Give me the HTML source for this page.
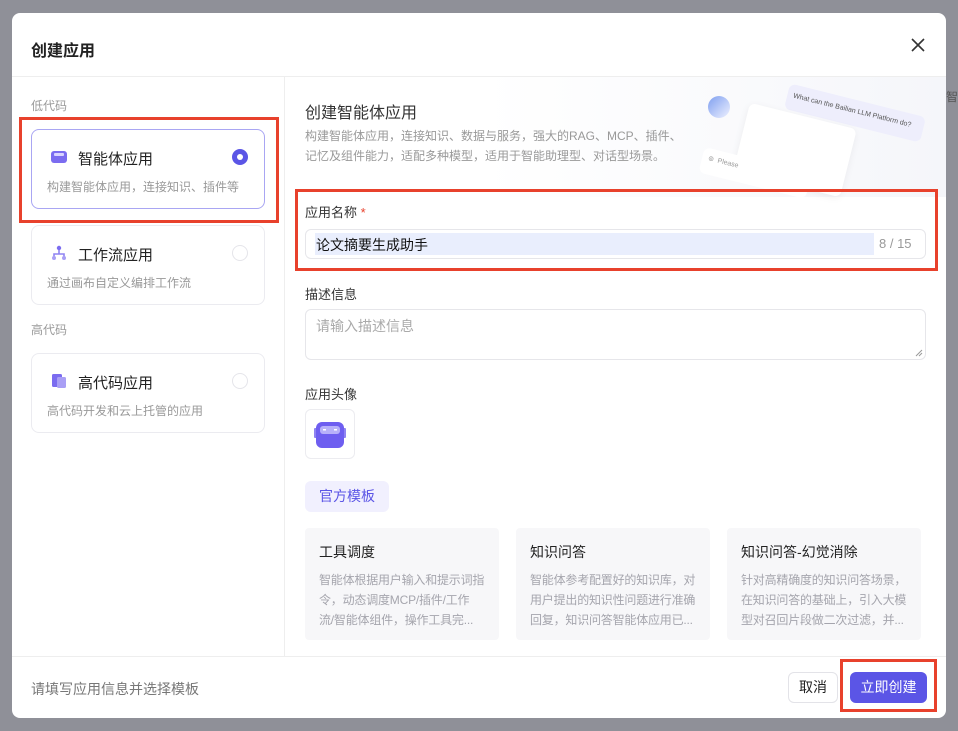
<!DOCTYPE html>
<html><head><meta charset="utf-8"><style>
*{box-sizing:border-box;margin:0;padding:0}
body{width:958px;height:731px;background:#8f9098;font-family:"Liberation Sans","Noto Sans CJK SC",sans-serif;position:relative;overflow:hidden;color:#1f2030}
.abs{position:absolute}
.modal{left:12px;top:13px;width:934px;height:705px;background:#fff;border-radius:8px;overflow:hidden}
.red{position:absolute;border:3px solid #e8412c}
.card{position:absolute;left:31px;width:234px;border:1px solid #ebebf0;border-radius:8px;background:#fff}
.ct{position:absolute;left:47px;font-size:15px;color:#222}
.cd{position:absolute;left:16px;font-size:12px;color:#999}
.lbl{font-size:13px;color:#333;position:absolute;left:305px}
.tpl{position:absolute;top:528px;width:194px;height:112px;background:#f7f7f9;border-radius:4px;padding:14px 14px;overflow:hidden}
.tpl b{display:block;font-weight:normal;font-size:14px;color:#222;margin-bottom:8px}
.tpl p{font-size:12px;color:#a5a5ad;line-height:20px;white-space:nowrap;letter-spacing:-0.2px}
</style></head><body>
<div class="abs" style="right:0;top:88px;width:12px;height:14px;font-size:12px;color:#555">智</div>
<div class="abs modal">
 <div class="abs" style="left:19px;top:24px;font-size:16px;font-weight:bold;color:#222">创建应用</div>
 <svg class="abs" style="left:899px;top:25px" width="14" height="14" viewBox="0 0 14 14"><path d="M1 1L13 13M13 1L1 13" stroke="#333" stroke-width="1.6"/></svg>
 <div class="abs" style="left:0;top:63px;width:934px;height:1px;background:#eee"></div>
 <div class="abs" style="left:272px;top:63px;width:1px;height:580px;background:#eee"></div>
 <div class="abs" style="left:273px;top:64px;width:661px;height:120px;background:linear-gradient(90deg,#fff 30%,#f5f6fa)"></div>
 <div class="abs" style="left:0;top:643px;width:934px;height:1px;background:#eee"></div>
</div>
<div class="abs" style="left:31px;top:97px;font-size:12px;color:#999">低代码</div>
<div class="card" style="top:129px;height:80px;border-color:#a9a6f3"></div>
<svg class="abs" style="left:50px;top:150px" width="18" height="14" viewBox="0 0 18 14"><rect x="1" y="1" width="16" height="12" rx="3" fill="#7b6cf0"/><rect x="4" y="3" width="10" height="3" rx="1" fill="#d9d4ff"/></svg>
<div class="ct" style="left:78px;top:148px">智能体应用</div>
<div class="cd" style="left:47px;top:178px">构建智能体应用，连接知识、插件等</div>
<div class="abs" style="left:232px;top:149px;width:16px;height:16px;border-radius:50%;background:#5b55e6;"><div style="margin:5px;width:6px;height:6px;border-radius:50%;background:#fff"></div></div>
<div class="red" style="left:19px;top:117px;width:260px;height:106px"></div>
<div class="card" style="top:225px;height:80px"></div>
<svg class="abs" style="left:51px;top:245px" width="16" height="16" viewBox="0 0 16 16"><circle cx="8" cy="3" r="2.2" fill="#7b6cf0"/><path d="M8 5v4M3 13V9h10v4" stroke="#8f83f2" stroke-width="1.6" fill="none"/><circle cx="3" cy="13" r="2" fill="#a99ff5"/><circle cx="13" cy="13" r="2" fill="#a99ff5"/></svg>
<div class="ct" style="left:78px;top:244px">工作流应用</div>
<div class="cd" style="left:47px;top:274px">通过画布自定义编排工作流</div>
<div class="abs" style="left:232px;top:245px;width:16px;height:16px;border-radius:50%;border:1px solid #e5e5ea"></div>
<div class="abs" style="left:31px;top:321px;font-size:12px;color:#999">高代码</div>
<div class="card" style="top:353px;height:80px"></div>
<svg class="abs" style="left:51px;top:373px" width="16" height="16" viewBox="0 0 16 16"><rect x="1" y="1" width="10" height="13" rx="1.5" fill="#7b6cf0"/><rect x="6" y="4" width="9" height="11" rx="1.5" fill="#a99ff5"/></svg>
<div class="ct" style="left:78px;top:372px">高代码应用</div>
<div class="cd" style="left:47px;top:402px">高代码开发和云上托管的应用</div>
<div class="abs" style="left:232px;top:373px;width:16px;height:16px;border-radius:50%;border:1px solid #e5e5ea"></div>
<div class="abs" style="left:305px;top:99px;font-size:16px;color:#333">创建智能体应用</div>
<div class="abs" style="left:305px;top:126px;font-size:12px;color:#999;line-height:20px">构建智能体应用，连接知识、数据与服务，强大的RAG、MCP、插件、<br>记忆及组件能力，适配多种模型，适用于智能助理型、对话型场景。</div>
<div class="abs" style="left:708px;top:96px;width:22px;height:22px;border-radius:50%;background:linear-gradient(135deg,#7f9ff0,#eef1ff)"></div>
<div class="abs" style="left:785px;top:100px;width:140px;height:26px;background:#eeeefc;border-radius:6px;transform:rotate(14deg);font-size:7px;color:#555;padding:8px 6px;white-space:nowrap">What can the Bailian LLM Platform do?</div>
<div class="abs" style="left:740px;top:115px;width:110px;height:70px;background:#fff;border-radius:6px;transform:rotate(14deg);box-shadow:0 2px 8px rgba(0,0,0,.06)"></div>
<div class="abs" style="left:700px;top:160px;width:110px;height:26px;background:#fff;border-radius:6px;transform:rotate(14deg);font-size:7px;color:#999;padding:6px">⊚ &nbsp;Please</div>
<div class="lbl" style="top:202px">应用名称 <span style="color:#e8412c">*</span></div>
<div class="abs" style="left:305px;top:229px;width:621px;height:30px;border:1px solid #e6e6ea;border-radius:6px"></div>
<div class="abs" style="left:315px;top:233px;width:559px;height:22px;background:#e9eefd"></div>
<div class="abs" style="left:316px;top:235px;font-size:14px;color:#111">论文摘要生成助手</div>
<div class="abs" style="left:879px;top:236px;font-size:13px;color:#999">8 / 15</div>
<div class="red" style="left:295px;top:189px;width:643px;height:82px"></div>
<div class="lbl" style="top:284px">描述信息</div>
<div class="abs" style="left:305px;top:309px;width:621px;height:51px;border:1px solid #e6e6ea;border-radius:6px"></div>
<div class="abs" style="left:316px;top:316px;font-size:14px;color:#aaa">请输入描述信息</div>
<svg class="abs" style="left:915px;top:349px" width="8" height="8"><path d="M1 7L7 1M4 7L7 4" stroke="#999"/></svg>
<div class="lbl" style="top:384px">应用头像</div>
<div class="abs" style="left:305px;top:409px;width:50px;height:50px;border:1px solid #ececf0;border-radius:6px"></div>
<svg class="abs" style="left:312px;top:420px" width="36" height="30" viewBox="0 0 36 30"><rect x="2" y="8" width="3" height="10" rx="1" fill="#8f83f2"/><rect x="31" y="8" width="3" height="10" rx="1" fill="#8f83f2"/><rect x="4" y="2" width="28" height="26" rx="6" fill="#6e5ef0"/><rect x="8" y="6" width="20" height="8" rx="3" fill="#b7b0fa"/><rect x="11" y="9" width="3" height="1.5" fill="#fff"/><rect x="22" y="9" width="3" height="1.5" fill="#fff"/></svg>
<div class="abs" style="left:305px;top:481px;width:84px;height:31px;background:#f1f0fe;border-radius:6px;font-size:14px;color:#5b55e6;text-align:center;line-height:31px">官方模板</div>
<div class="tpl" style="left:305px"><b>工具调度</b><p>智能体根据用户输入和提示词指<br>令，动态调度MCP/插件/工作<br>流/智能体组件，操作工具完...</p></div>
<div class="tpl" style="left:516px"><b>知识问答</b><p>智能体参考配置好的知识库，对<br>用户提出的知识性问题进行准确<br>回复，知识问答智能体应用已...</p></div>
<div class="tpl" style="left:727px"><b>知识问答-幻觉消除</b><p>针对高精确度的知识问答场景，<br>在知识问答的基础上，引入大模<br>型对召回片段做二次过滤，并...</p></div>
<div class="abs" style="left:31px;top:679px;font-size:14px;color:#777">请填写应用信息并选择模板</div>
<div class="abs" style="left:788px;top:672px;width:50px;height:31px;border:1px solid #e3e3e8;border-radius:6px;font-size:14px;text-align:center;line-height:29px;color:#222">取消</div>
<div class="abs" style="left:850px;top:672px;width:77px;height:31px;background:#5b55e6;border-radius:6px;font-size:14px;text-align:center;line-height:31px;color:#fff">立即创建</div>
<div class="red" style="left:840px;top:659px;width:97px;height:53px"></div>
</body></html>
